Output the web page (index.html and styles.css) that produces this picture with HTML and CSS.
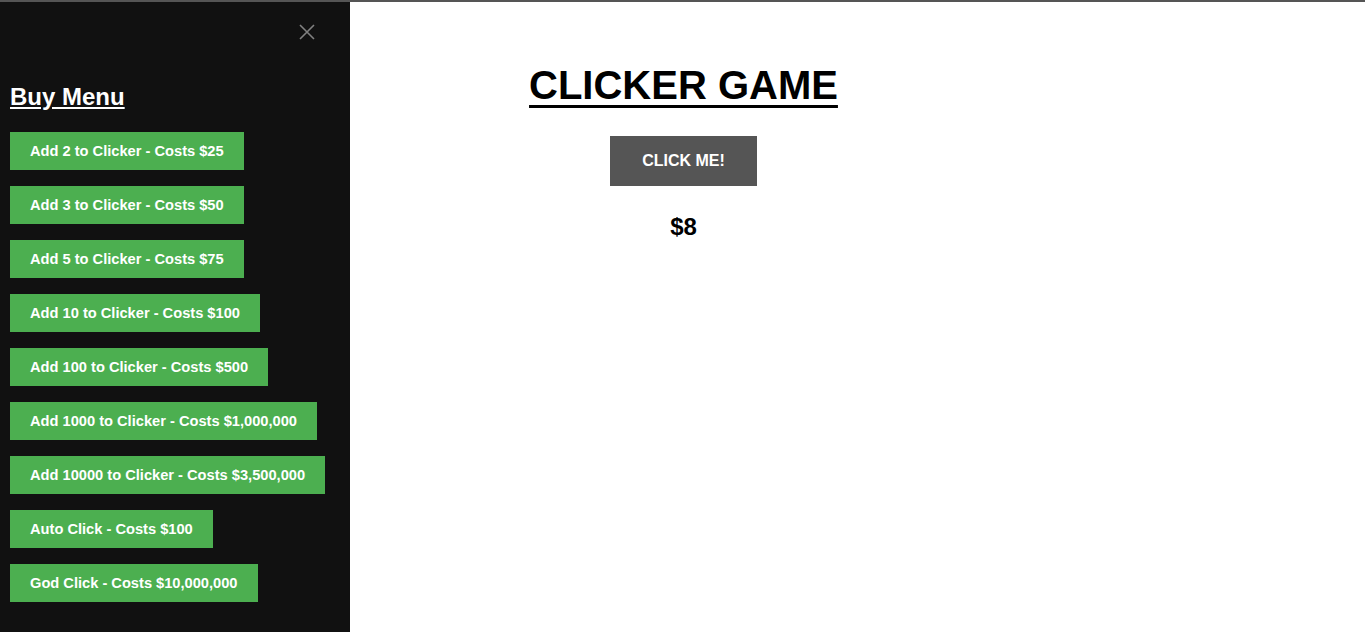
FILE: index.html
```html
<!DOCTYPE html>
<html>
<head>
<meta charset="utf-8">
<title>Clicker Game</title>
<link rel="stylesheet" href="styles.css">
</head>
<body>
<div class="sidenav">
  <a class="closebtn" href="#" aria-label="Close">
    <svg width="16" height="16" viewBox="0 0 16 16"><path d="M1 1 L15 15 M15 1 L1 15" stroke="#818181" stroke-width="1.6" fill="none"/></svg>
  </a>
  <h2 class="menu-title">Buy Menu</h2>
  <div class="buy-list">
    <button class="buy">Add 2 to Clicker - Costs $25</button>
    <button class="buy">Add 3 to Clicker - Costs $50</button>
    <button class="buy">Add 5 to Clicker - Costs $75</button>
    <button class="buy">Add 10 to Clicker - Costs $100</button>
    <button class="buy">Add 100 to Clicker - Costs $500</button>
    <button class="buy">Add 1000 to Clicker - Costs $1,000,000</button>
    <button class="buy">Add 10000 to Clicker - Costs $3,500,000</button>
    <button class="buy">Auto Click - Costs $100</button>
    <button class="buy">God Click - Costs $10,000,000</button>
  </div>
</div>
<main class="main">
  <h1 class="title">CLICKER GAME</h1>
  <button class="clicker">CLICK ME!</button>
  <div class="money">$8</div>
</main>
</body>
</html>
```
FILE: styles.css
```css
html, body {
  margin: 0;
  padding: 0;
  height: 100%;
}
body {
  border-top: 2px solid #555;
  box-sizing: border-box;
  background: #fff;
  font-family: "Liberation Sans", Arial, sans-serif;
  overflow: hidden;
}
.sidenav {
  position: fixed;
  top: 2px;
  left: 0;
  bottom: 0;
  width: 350px;
  background: #111;
  box-sizing: border-box;
  padding: 81px 10px 0 10px;
}
.closebtn {
  position: absolute;
  top: 22px;
  left: 299px;
  width: 16px;
  height: 16px;
  display: block;
}
.closebtn svg { display: block; }
.menu-title {
  margin: 0 0 21px 0;
  color: #fff;
  font-size: 24px;
  line-height: 28px;
  font-weight: bold;
  text-decoration: underline;
}
.buy-list {
  display: flex;
  flex-direction: column;
  align-items: flex-start;
  gap: 16px;
}
.buy {
  background: #4CAF50;
  color: #fff;
  border: none;
  font-family: "Liberation Sans", Arial, sans-serif;
  font-weight: bold;
  font-size: 14.65px;
  line-height: 18px;
  padding: 10px 20px;
  margin: 0;
}
.main {
  text-align: center;
  padding-top: 60px;
  padding-left: 2px;
}
.title {
  margin: 0 0 28px 0;
  font-size: 40px;
  font-weight: bold;
  text-decoration: underline;
  text-decoration-thickness: 3px;
  text-underline-offset: 6px;
  line-height: 46px;
  color: #000;
}
.clicker {
  background: #555;
  color: #fff;
  border: none;
  font-family: "Liberation Sans", Arial, sans-serif;
  font-weight: bold;
  font-size: 16px;
  line-height: 18px;
  padding: 16px 32px;
  margin: 0;
  display: inline-block;
}
.money {
  margin-top: 27px;
  font-size: 24px;
  font-weight: bold;
  line-height: 28px;
  color: #000;
}
```
